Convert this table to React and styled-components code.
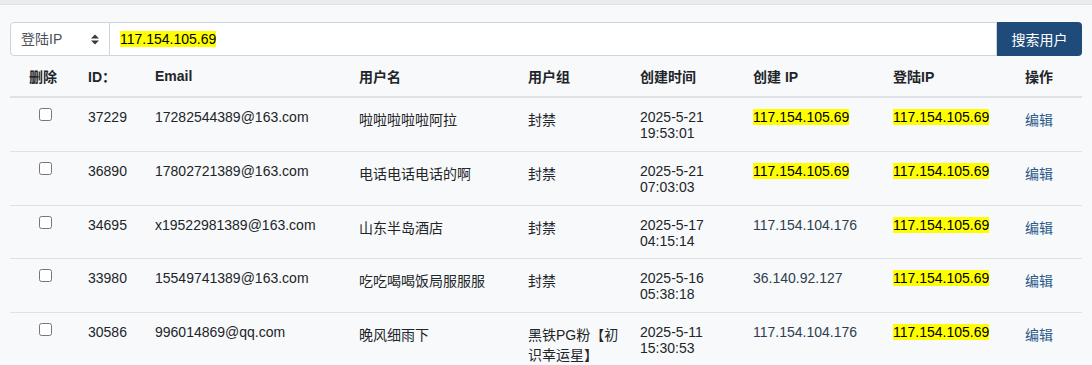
import React from 'react';
import styled, { createGlobalStyle } from 'styled-components';

const GlobalStyle = createGlobalStyle`
  body {
    margin: 0;
    background: #f8f9fa;
    font-family: "Liberation Sans", Arial, "Noto Sans CJK SC", sans-serif;
    font-size: 14px;
    color: #212529;
  }
`;

const TopBar = styled.div`
  height: 4px;
  background: #e9ecef;
  border-bottom: 1px solid #dee2e6;
`;

const Page = styled.div`
  padding: 17px 10px 0;
`;

const SearchGroup = styled.div`
  display: flex;
  height: 34px;
`;

const SelectWrap = styled.div`
  position: relative;
  width: 100px;
  flex: none;
`;

const Select = styled.select`
  appearance: none;
  width: 100%;
  height: 100%;
  margin: 0;
  padding: 0 10px;
  border: 1px solid #ced4da;
  border-radius: 4px 0 0 4px;
  background: #fff;
  font: inherit;
  color: #495057;
  outline: none;
`;

const SelectArrow = styled.svg`
  position: absolute;
  right: 11px;
  top: 12px;
  pointer-events: none;
`;

const SearchInput = styled.div`
  flex: 1;
  display: flex;
  align-items: center;
  padding: 0 10px;
  background: #fff;
  border: 1px solid #ced4da;
  border-left: none;
  color: #000;
`;

const SearchButton = styled.button`
  flex: none;
  width: 85px;
  height: 100%;
  border: none;
  border-radius: 0 4px 4px 0;
  background: #1f4b7a;
  color: #fff;
  font: inherit;
  font-size: 14px;
  cursor: pointer;
`;

const Table = styled.table`
  width: 100%;
  border-collapse: collapse;
  table-layout: fixed;
`;

const Th = styled.th`
  padding: 10px 12px;
  font-weight: bold;
  text-align: ${(p) => (p.$center ? 'center' : 'left')};
  border-bottom: 2px solid #dee2e6;
  color: #212529;
`;

const Td = styled.td`
  padding: 11px 8px 9.8px 12px;
  vertical-align: top;
  border-top: 1px solid #dee2e6;
  text-align: ${(p) => (p.$center ? 'center' : 'left')};
  color: ${(p) => (p.$muted ? '#2f3e4e' : '#212529')};
`;

const Check = styled.input`
  display: block;
  margin: -1px auto 0;
  width: 13px;
  height: 13px;
`;

const Mark = styled.mark`
  background: #ffff00;
  color: #000;
  padding: 0;
`;

const EditLink = styled.a`
  color: #2b5a8a;
  text-decoration: none;
  cursor: pointer;
`;

const QUERY = '117.154.105.69';

const users = [
  { id: 37229, email: '17282544389@163.com', name: '啦啦啦啦啦阿拉', group: '封禁', date: '2025-5-21', time: '19:53:01', createIp: '117.154.105.69', loginIp: '117.154.105.69' },
  { id: 36890, email: '17802721389@163.com', name: '电话电话电话的啊', group: '封禁', date: '2025-5-21', time: '07:03:03', createIp: '117.154.105.69', loginIp: '117.154.105.69' },
  { id: 34695, email: 'x19522981389@163.com', name: '山东半岛酒店', group: '封禁', date: '2025-5-17', time: '04:15:14', createIp: '117.154.104.176', loginIp: '117.154.105.69' },
  { id: 33980, email: '15549741389@163.com', name: '吃吃喝喝饭局服服服', group: '封禁', date: '2025-5-16', time: '05:38:18', createIp: '36.140.92.127', loginIp: '117.154.105.69' },
  { id: 30586, email: '996014869@qq.com', name: '晚风细雨下', group: '黑铁PG粉【初识幸运星】', date: '2025-5-11', time: '15:30:53', createIp: '117.154.104.176', loginIp: '117.154.105.69' },
];

const widths = [66, 67, 204, 169, 112, 113, 140, 132, 69];

function Ip({ value }) {
  return value === QUERY ? <Mark>{value}</Mark> : value;
}

export default function App() {
  return (
    <>
      <GlobalStyle />
      <TopBar />
      <Page>
        <SearchGroup>
          <SelectWrap>
            <Select defaultValue="login">
              <option value="login">登陆IP</option>
              <option value="create">创建 IP</option>
            </Select>
            <SelectArrow width="8" height="11" viewBox="0 0 8 11">
              <path d="M0 4.5 L4 0.5 L8 4.5 Z M0 6.5 L4 10.5 L8 6.5 Z" fill="#343a40" />
            </SelectArrow>
          </SelectWrap>
          <SearchInput>
            <Mark>{QUERY}</Mark>
          </SearchInput>
          <SearchButton>搜索用户</SearchButton>
        </SearchGroup>

        <Table>
          <colgroup>
            {widths.map((w, i) => (
              <col key={i} style={{ width: w }} />
            ))}
          </colgroup>
          <thead>
            <tr>
              <Th $center>删除</Th>
              <Th>ID：</Th>
              <Th>Email</Th>
              <Th>用户名</Th>
              <Th>用户组</Th>
              <Th>创建时间</Th>
              <Th>创建 IP</Th>
              <Th>登陆IP</Th>
              <Th>操作</Th>
            </tr>
          </thead>
          <tbody>
            {users.map((u) => (
              <tr key={u.id}>
                <Td $center>
                  <Check type="checkbox" />
                </Td>
                <Td>{u.id}</Td>
                <Td>{u.email}</Td>
                <Td>{u.name}</Td>
                <Td>{u.group}</Td>
                <Td>
                  {u.date} {u.time}
                </Td>
                <Td $muted>
                  <Ip value={u.createIp} />
                </Td>
                <Td>
                  <Ip value={u.loginIp} />
                </Td>
                <Td>
                  <EditLink>编辑</EditLink>
                </Td>
              </tr>
            ))}
          </tbody>
        </Table>
      </Page>
    </>
  );
}
